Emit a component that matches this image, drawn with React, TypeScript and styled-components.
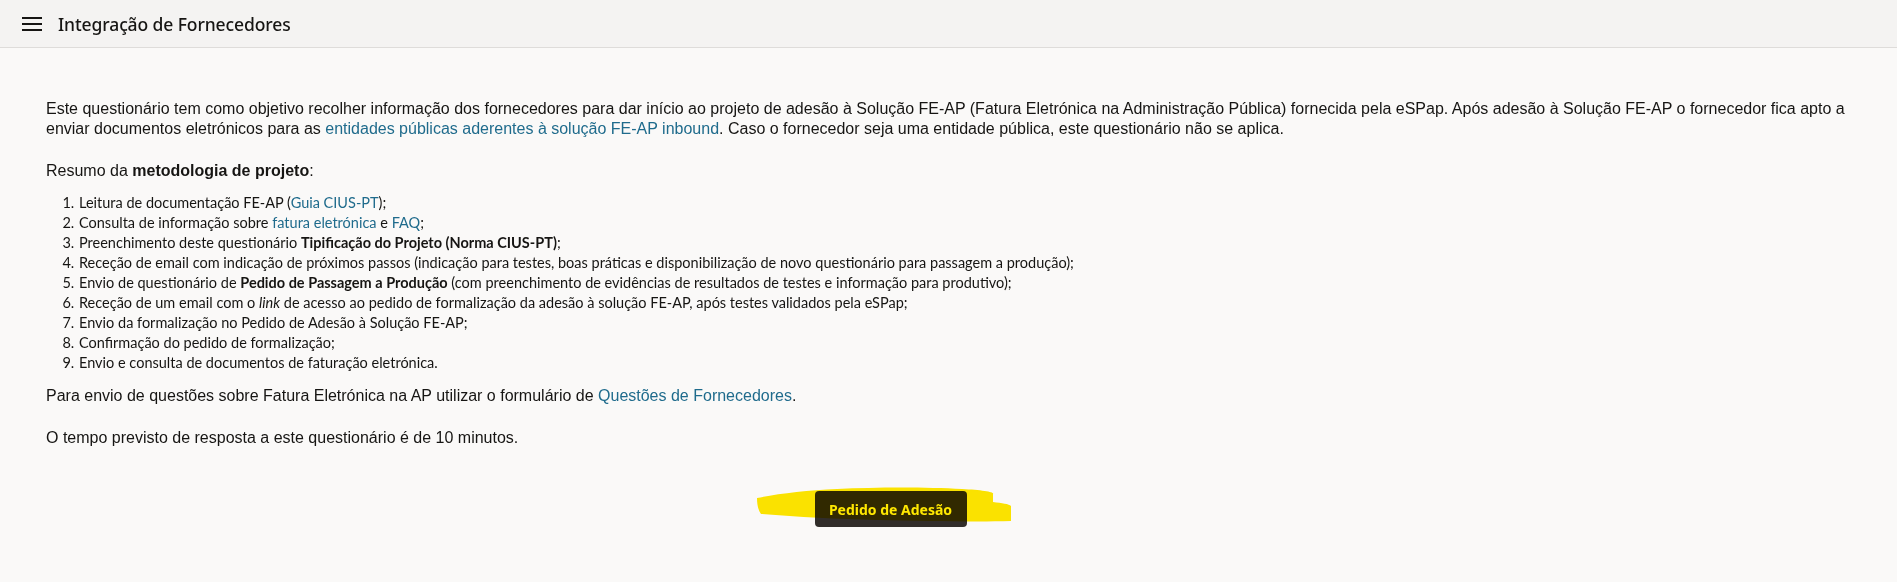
import React from "react";
import styled, { createGlobalStyle } from "styled-components";

const GlobalStyle = createGlobalStyle`
  html, body { margin: 0; padding: 0; }
  body {
    background: #faf9f8;
    color: #161513;
    font-family: "Liberation Sans", Arial, sans-serif;
  }
`;

const Page = styled.div`
  min-height: 582px;
  background: #faf9f8;
`;

const Header = styled.header`
  height: 47px;
  display: flex;
  align-items: center;
  gap: 14px;
  padding: 0 0 0 20px;
  background: #f4f3f2;
  border-bottom: 1px solid #dedcda;
  box-sizing: content-box;
`;

const MenuButton = styled.button`
  width: 24px;
  height: 24px;
  padding: 0;
  border: 0;
  background: transparent;
  display: flex;
  align-items: center;
  justify-content: center;
  color: #161513;
`;

const Title = styled.h1`
  margin: 0;
  font-family: "Noto Sans", "Open Sans", sans-serif;
  font-size: 17.5px;
  font-weight: 500;
  color: #161513;
  letter-spacing: -0.1px;
`;

const Content = styled.main`
  padding: 51px 46px 0 46px;
`;

const Para = styled.p<{ $top?: number }>`
  margin: ${(p) => p.$top ?? 0}px 0 0 0;
  font-family: "Liberation Sans", Arial, sans-serif;
  font-size: 16px;
  line-height: 20px;
  color: #161513;
`;

const Link = styled.a`
  color: #1f6b8c;
  text-decoration: none;
`;

const Steps = styled.ol`
  margin: 12px 0 0 0;
  padding: 0 0 0 32px;
  font-family: "Lato", "Noto Sans", sans-serif;
  font-size: 14.5px;
  line-height: 20px;
  color: #161513;
`;

const Step = styled.li`
  padding-left: 1px;
`;

const ButtonRow = styled.div`
  display: flex;
  justify-content: center;
  margin-top: 43px;
  padding-right: 116px;
`;

const ButtonWrap = styled.div`
  position: relative;
  display: inline-flex;
`;

const PrimaryButton = styled.button`
  width: 152px;
  height: 36px;
  border: 0;
  border-radius: 4px;
  background: #312d2a;
  color: #ffffff;
  font-family: "Noto Sans", "Open Sans", sans-serif;
  font-weight: 700;
  font-size: 14px;
  cursor: pointer;
`;

const Highlight = styled.svg`
  position: absolute;
  left: -58px;
  top: -5px;
  width: 254px;
  height: 40px;
  mix-blend-mode: multiply;
  pointer-events: none;
`;

const Hamburger = () => (
  <svg width="20" height="14" viewBox="0 0 20 14" aria-hidden="true">
    <rect x="0" y="0" width="20" height="2" fill="currentColor" />
    <rect x="0" y="6" width="20" height="2" fill="currentColor" />
    <rect x="0" y="12" width="20" height="2" fill="currentColor" />
  </svg>
);

export default function App() {
  return (
    <Page>
      <GlobalStyle />
      <Header>
        <MenuButton aria-label="Menu">
          <Hamburger />
        </MenuButton>
        <Title>Integração de Fornecedores</Title>
      </Header>
      <Content>
        <Para>
          Este questionário tem como objetivo recolher informação dos fornecedores para dar início ao projeto de adesão à
          Solução FE-AP (Fatura Eletrónica na Administração Pública) fornecida pela eSPap. Após adesão à Solução FE-AP o
          fornecedor fica apto a enviar documentos eletrónicos para as{" "}
          <Link href="#">entidades públicas aderentes à solução FE-AP inbound</Link>. Caso o fornecedor seja uma entidade
          pública, este questionário não se aplica.
        </Para>
        <Para $top={22}>
          Resumo da <b>metodologia de projeto</b>:
        </Para>
        <Steps>
          <Step>
            Leitura de documentação FE-AP (<Link href="#">Guia CIUS-PT</Link>);
          </Step>
          <Step>
            Consulta de informação sobre <Link href="#">fatura eletrónica</Link> e <Link href="#">FAQ</Link>;
          </Step>
          <Step>
            Preenchimento deste questionário <b>Tipificação do Projeto (Norma CIUS-PT)</b>;
          </Step>
          <Step>
            Receção de email com indicação de próximos passos (indicação para testes, boas práticas e disponibilização de
            novo questionário para passagem a produção);
          </Step>
          <Step>
            Envio de questionário de <b>Pedido de Passagem a Produção</b> (com preenchimento de evidências de resultados de
            testes e informação para produtivo);
          </Step>
          <Step>
            Receção de um email com o <i>link</i> de acesso ao pedido de formalização da adesão à solução FE-AP, após
            testes validados pela eSPap;
          </Step>
          <Step>Envio da formalização no Pedido de Adesão à Solução FE-AP;</Step>
          <Step>Confirmação do pedido de formalização;</Step>
          <Step>Envio e consulta de documentos de faturação eletrónica.</Step>
        </Steps>
        <Para $top={13}>
          Para envio de questões sobre Fatura Eletrónica na AP utilizar o formulário de{" "}
          <Link href="#">Questões de Fornecedores</Link>.
        </Para>
        <Para $top={22}>O tempo previsto de resposta a este questionário é de 10 minutos.</Para>
        <ButtonRow>
          <ButtonWrap>
            <PrimaryButton>Pedido de Adesão</PrimaryButton>
            <Highlight viewBox="0 0 254 40" aria-hidden="true">
              <path
                d="M0 12 C20 8 50 4 80 3 C120 1 170 1 205 3 C225 4 238 6 236 8 L236 16 C245 17 252 18 254 20 L254 35 C220 36 170 35 120 34 C80 33 40 31 4 28 C1 24 0 18 0 12 Z"
                fill="#ffe800"
              />
            </Highlight>
          </ButtonWrap>
        </ButtonRow>
      </Content>
    </Page>
  );
}
